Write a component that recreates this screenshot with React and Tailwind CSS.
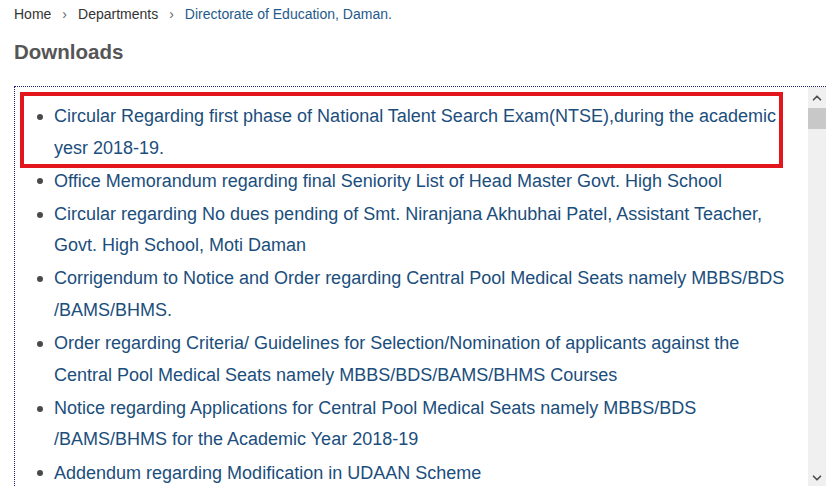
import React from 'react';
import { ChevronUp, ChevronDown } from 'lucide-react';

const items = [
    ['Circular Regarding first phase of National Talent Search Exam(NTSE),during the academic', 'yesr 2018-19.'],
    ['Office Memorandum regarding final Seniority List of Head Master Govt. High School'],
    ['Circular regarding No dues pending of Smt. Niranjana Akhubhai Patel, Assistant Teacher,', 'Govt. High School, Moti Daman'],
    ['Corrigendum to Notice and Order regarding Central Pool Medical Seats namely MBBS/BDS', '/BAMS/BHMS.'],
    ['Order regarding Criteria/ Guidelines for Selection/Nomination of applicants against the', 'Central Pool Medical Seats namely MBBS/BDS/BAMS/BHMS Courses'],
    ['Notice regarding Applications for Central Pool Medical Seats namely MBBS/BDS', '/BAMS/BHMS for the Academic Year 2018-19'],
    ['Addendum regarding Modification in UDAAN Scheme'],
];

export default function App() {
    return (
        <div className="h-[487px] overflow-hidden bg-white pl-[14px] font-['Liberation_Sans',Arial,sans-serif]">
            {/* breadcrumb */}
            <div className="flex items-center pt-[5px] text-[14px] leading-[18px] text-[#333]">
                <span>Home</span>
                <span className="px-[11px] text-[#666]">›</span>
                <span>Departments</span>
                <span className="px-[11px] text-[#666]">›</span>
                <span className="text-[#1f5a8c]">Directorate of Education, Daman.</span>
            </div>

            <h1 className="mt-[17px] text-[20.5px] font-bold leading-[24px] text-[#555]">Downloads</h1>

            <div className="relative mt-[22px] flex h-[400px] border-t border-l border-dotted border-[#1c1c6b]">
                <ul className="flex-1 pl-[22px] pt-[14px] text-[18px] leading-[31.6px] text-[#1b4e7c]">
                    {items.map((lines, i) => (
                        <li key={i} className="mb-[1.5px] flex">
                            <span className="flex h-[31.6px] w-[17px] shrink-0 items-center">
                                <span className="h-[6px] w-[6px] rounded-full bg-[#4a4a4a]" />
                            </span>
                            <span className="whitespace-nowrap">
                                {lines.map((l, j) => (
                                    <span key={j} className="block">{l}</span>
                                ))}
                            </span>
                        </li>
                    ))}
                </ul>

                {/* scrollbar */}
                <div className="flex w-[18px] shrink-0 flex-col bg-[#f0f0f0]">
                    <div className="flex h-[21px] items-center justify-center">
                        <ChevronUp className="h-[14px] w-[14px] text-[#505050]" strokeWidth={3} />
                    </div>
                    <div className="h-[21px] bg-[#c8c8c8]" />
                    <div className="flex-1" />
                    <div className="flex h-[17px] items-center justify-center">
                        <ChevronDown className="h-[14px] w-[14px] text-[#505050]" strokeWidth={3} />
                    </div>
                </div>

                {/* highlight box */}
                <div className="pointer-events-none absolute left-[5px] top-[5px] h-[76px] w-[763px] border-4 border-[#e3161d]" />
            </div>
        </div>
    );
}
